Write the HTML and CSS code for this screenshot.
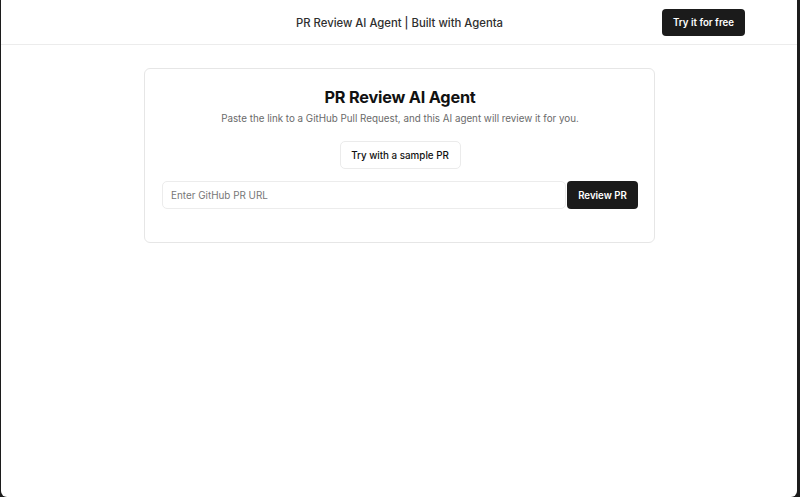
FILE: index.html
```html
<!DOCTYPE html>
<html>
<head>
<meta charset="utf-8">
<link rel="stylesheet" href="styles.css">
</head>
<body>
<div class="page">
  <header class="topbar">
    <div class="topbar-title">PR Review AI Agent | Built with Agenta</div>
    <button class="btn-dark btn-try">Try it for free</button>
  </header>
  <main class="main">
    <section class="card">
      <h1 class="card-title">PR Review AI Agent</h1>
      <p class="card-sub">Paste the link to a GitHub Pull Request, and this AI agent will review it for you.</p>
      <button class="btn-sample">Try with a sample PR</button>
      <div class="form-row">
        <input class="url-input" type="text" placeholder="Enter GitHub PR URL">
        <button class="btn-dark btn-review">Review PR</button>
      </div>
    </section>
  </main>
</div>
</body>
</html>
```
FILE: styles.css
```css
html, body {
  margin: 0;
  padding: 0;
  height: 100%;
  background: #1c1c1c;
}
body {
  font-family: Inter, "Noto Sans", sans-serif;
}
.page {
  margin: 0 3px 0 1px;
  height: 497px;
  background: #fff;
  border-radius: 0 0 6px 6px;
  box-sizing: border-box;
}
.topbar {
  height: 45px;
  border-bottom: 1px solid #ececec;
  box-sizing: border-box;
  display: flex;
  align-items: center;
  justify-content: center;
  position: relative;
}
.topbar-title {
  font-size: 11.3px;
  font-weight: 500;
  color: #2e2e2e;
  margin-left: 1px;
  padding-top: 1px;
}
.btn-dark {
  background: #1b1b1b;
  color: #fff;
  border: none;
  border-radius: 4px;
  font-family: Inter, sans-serif;
  font-weight: 600;
  font-size: 9.7px;
  cursor: pointer;
}
.btn-try {
  position: absolute;
  left: 661px;
  top: 9px;
  width: 83px;
  height: 27px;
  padding: 0;
}
.main {
  display: flex;
  justify-content: center;
  padding-top: 23px;
}
.card {
  width: 511px;
  height: 175px;
  box-sizing: border-box;
  border: 1px solid #e6e6e6;
  border-radius: 6px;
  display: flex;
  flex-direction: column;
  align-items: center;
  padding: 16px 16px 0 17px;
  margin-left: 1px;
}
.card-title {
  margin: 0;
  font-size: 16.3px;
  font-weight: 700;
  color: #111;
  line-height: 24px;
  letter-spacing: -0.2px;
}
.card-sub {
  margin: 3px 0 0;
  font-size: 9.8px;
  color: #6a6a6a;
  line-height: 14px;
}
.btn-sample {
  margin-top: 15px;
  width: 121px;
  height: 28px;
  background: #fff;
  border: 1px solid #ebebeb;
  border-radius: 5px;
  font-family: Inter, sans-serif;
  font-size: 9.8px;
  font-weight: 500;
  color: #111;
  padding: 0;
}
.form-row {
  margin-top: 12px;
  display: flex;
  gap: 1px;
  width: 100%;
}
.url-input {
  flex: 1;
  height: 28px;
  box-sizing: border-box;
  border: 1px solid #ececec;
  border-radius: 5px;
  padding: 0 8px;
  font-family: Inter, sans-serif;
  font-size: 9.9px;
  color: #111;
  outline: none;
}
.url-input::placeholder {
  color: #777;
}
.btn-review {
  width: 71px;
  height: 28px;
  padding: 0;
}
```
